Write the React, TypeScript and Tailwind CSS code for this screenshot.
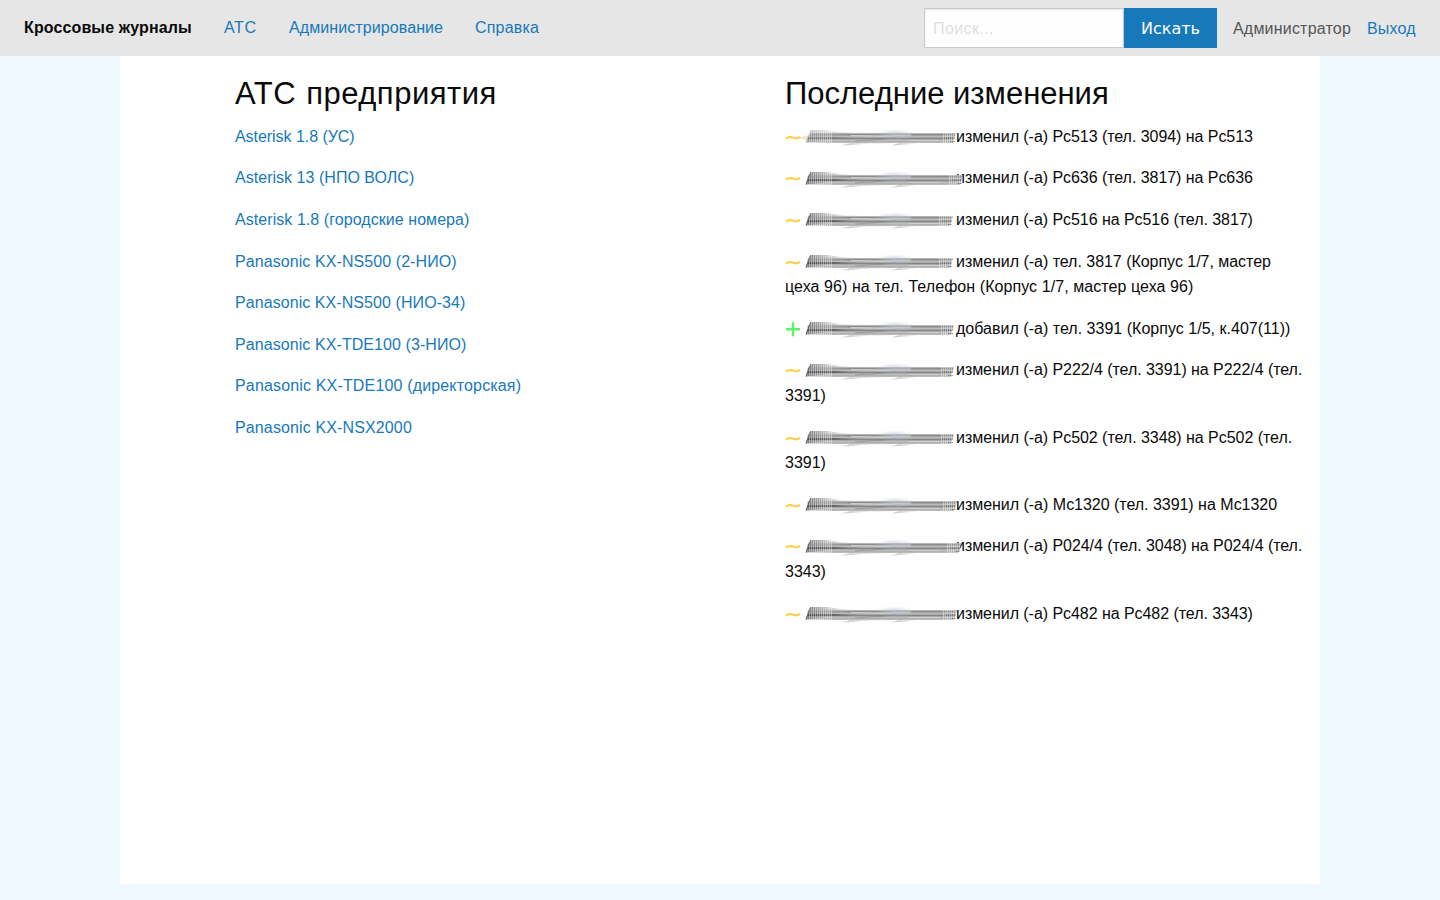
type Change = {
  kind: "edit" | "add";
  text: string;
  tracking: string;
  rest?: string;
  restTracking?: string;
  end: number;
};

const stations = [
  { name: "Asterisk 1.8 (УС)", tracking: "tracking-[-0.05px]" },
  { name: "Asterisk 13 (НПО ВОЛС)", tracking: "tracking-[0.03px]" },
  { name: "Asterisk 1.8 (городские номера)", tracking: "tracking-[0.06px]" },
  { name: "Panasonic KX-NS500 (2-НИО)", tracking: "tracking-[0.08px]" },
  { name: "Panasonic KX-NS500 (НИО-34)", tracking: "tracking-[0.07px]" },
  { name: "Panasonic KX-TDE100 (3-НИО)", tracking: "tracking-[0.08px]" },
  { name: "Panasonic KX-TDE100 (директорская)", tracking: "tracking-[0.16px]" },
  { name: "Panasonic KX-NSX2000", tracking: "tracking-[0.13px]" },
];

const changes: Change[] = [
  { kind: "edit", text: "изменил (-а) Рс513 (тел. 3094) на Рс513", tracking: "tracking-[-0.05px]", end: 151 },
  { kind: "edit", text: "изменил (-а) Рс636 (тел. 3817) на Рс636", tracking: "tracking-[-0.05px]", end: 158 },
  { kind: "edit", text: "изменил (-а) Рс516 на Рс516 (тел. 3817)", tracking: "tracking-[-0.05px]", end: 148 },
  {
    kind: "edit",
    text: "изменил (-а) тел. 3817 (Корпус 1/7, мастер",
    tracking: "tracking-[-0.03px]",
    rest: "цеха 96) на тел. Телефон (Корпус 1/7, мастер цеха 96)",
    restTracking: "tracking-[0.07px]",
    end: 148,
  },
  { kind: "add", text: "добавил (-а) тел. 3391 (Корпус 1/5, к.407(11))", tracking: "tracking-[0.02px]", end: 149 },
  { kind: "edit", text: "изменил (-а) Р222/4 (тел. 3391) на Р222/4 (тел.", tracking: "tracking-[-0.05px]", rest: "3391)", end: 149 },
  { kind: "edit", text: "изменил (-а) Рс502 (тел. 3348) на Рс502 (тел.", tracking: "tracking-[-0.04px]", rest: "3391)", end: 149 },
  { kind: "edit", text: "изменил (-а) Мс1320 (тел. 3391) на Мс1320", tracking: "tracking-[-0.03px]", end: 152 },
  { kind: "edit", text: "изменил (-а) Р024/4 (тел. 3048) на Р024/4 (тел.", tracking: "tracking-[-0.05px]", rest: "3343)", end: 156 },
  { kind: "edit", text: "изменил (-а) Рс482 на Рс482 (тел. 3343)", tracking: "tracking-[-0.05px]", end: 152 },
];

function SmudgeDefs() {
  return (
    <svg className="absolute size-0" aria-hidden="true">
      <defs>
        <linearGradient id="band" x1="0" y1="0" x2="0" y2="1">
          <stop offset="0" stopColor="#bbb" stopOpacity="0.6" />
          <stop offset="0.18" stopColor="#8c8c8c" />
          <stop offset="0.38" stopColor="#c0c0c0" />
          <stop offset="0.54" stopColor="#858585" />
          <stop offset="0.7" stopColor="#c2c2c2" />
          <stop offset="0.88" stopColor="#a8a8a8" />
          <stop offset="1" stopColor="#ccc" stopOpacity="0.5" />
        </linearGradient>
        <linearGradient id="head" x1="0" y1="0" x2="1" y2="0">
          <stop offset="0" stopColor="#777" />
          <stop offset="0.4" stopColor="#999" stopOpacity="0.75" />
          <stop offset="1" stopColor="#ccc" stopOpacity="0" />
        </linearGradient>
        <linearGradient id="core" x1="0" y1="0" x2="1" y2="0">
          <stop offset="0" stopColor="#222" />
          <stop offset="0.5" stopColor="#666" />
          <stop offset="1" stopColor="#888" stopOpacity="0" />
        </linearGradient>
        <linearGradient id="wisp" x1="0" y1="0" x2="1" y2="0">
          <stop offset="0" stopColor="#888" stopOpacity="0.7" />
          <stop offset="1" stopColor="#bbb" stopOpacity="0.1" />
        </linearGradient>
        <radialGradient id="glow">
          <stop offset="0" stopColor="#b5bccb" stopOpacity="0.75" />
          <stop offset="1" stopColor="#c8cdd6" stopOpacity="0" />
        </radialGradient>
        <pattern id="hatch" width="2" height="20" patternUnits="userSpaceOnUse">
          <rect width="1" height="20" fill="#fff" fillOpacity="0.4" />
        </pattern>
      </defs>
    </svg>
  );
}

function Smudge({ end, faded }: { end: number; faded: boolean }) {
  return (
    <svg
      className="relative mt-[4.4px] h-5 w-[151px] shrink-0 overflow-visible blur-[0.35px]"
      viewBox="0 0 151 20"
      aria-hidden="true"
    >
      {faded && <path d="M-6 9.5L8 6V13L-6 10.5Z" fill="#f0dcae" fillOpacity="0.7" />}
      <path d={`M${faded ? 6 : 3} 5L28 4.5L60 5H${end}L${end - 3} 15H95L60 15.5L1 14.5Z`} fill="url(#band)" />
      <path d="M5.5 2H22L44 5V10L0.5 14.5Z" fill="url(#head)" fillOpacity={faded ? 0.5 : 1} />
      <path d="M3 9.5L30 9L68 10L30 11L2 10.8Z" fill="url(#core)" fillOpacity={faded ? 0.4 : 0.8} />
      <path d="M50 13Q72 12 92 9.5" stroke="#777" strokeOpacity="0.5" fill="none" />
      <path d="M46 7.5Q78 9 106 7" stroke="#e2e2e2" strokeOpacity="0.7" fill="none" />
      <path d="M104 12.5H134" stroke="#ddd" strokeOpacity="0.6" />
      <ellipse cx="90" cy="6.5" rx="20" ry="5.5" fill="url(#glow)" />
      <path d="M36 17.5L46 15H67L52 16.8Z" fill="url(#wisp)" />
      <path d="M86 17.5L94 15H114L102 16.5Z" fill="url(#wisp)" />
      <path d={`M${end - 12} 10H${end - 1}M${end - 6} 13.5H${end - 1}`} stroke="#333" strokeOpacity="0.5" />
      <path d="M4 1H28V15H2Z" fill="url(#hatch)" />
      <path d={`M36 15H66V18H36ZM86 15H114V18H86ZM${end - 14} 5H${end}V15H${end - 14}Z`} fill="url(#hatch)" />
      {!faded && <path d="M5.5 2.5L1.2 14.5" stroke="#55504c" strokeOpacity="0.7" fill="none" />}
    </svg>
  );
}

function Marker({ kind }: { kind: Change["kind"] }) {
  return (
    <svg className="mr-1 h-[26px] w-4 shrink-0" viewBox="0 0 16 26" fill="none" aria-hidden="true">
      {kind === "add" ? (
        <path d="M1 13.2H15M8 6.2V20.2" stroke="#5df365" strokeWidth="2.4" />
      ) : (
        <path d="M1 14.7C3 12.700 5 12.300 8 13.700C11 15.100 13 14.500 15 12.800" stroke="#ffcb3d" strokeWidth="2" />
      )}
    </svg>
  );
}

export default function App() {
  return (
    <div className="flex min-h-screen flex-col bg-[#eff7ff] font-['Liberation_Sans',sans-serif] text-base leading-[1.6] text-[#0a0a0a]">
      <SmudgeDefs />
      <header className="flex h-14 items-center justify-between bg-[#e6e6e6] px-6 leading-none whitespace-nowrap">
        <nav className="flex gap-8 text-[#1779ba]">
          <span className="w-[168px] font-bold tracking-[0.12px] text-[#0a0a0a]">Кроссовые журналы</span>
          <a className="w-[33px] tracking-[0.7px]">АТС</a>
          <a className="w-[154px] tracking-[0.09px]">Администрирование</a>
          <a className="tracking-[0.18px]">Справка</a>
        </nav>
        <div className="flex items-center">
          <input
            className="h-10 w-[200px] border border-[#cacaca] bg-[#fefefe] px-2 pt-0.5 tracking-[0.4px] shadow-[inset_0_1px_2px_rgba(10,10,10,0.1)] outline-none placeholder:text-[#dedede]"
            placeholder="Поиск..."
          />
          <button className="h-10 w-[93px] bg-[#1779ba] pt-0.5 font-['DejaVu_Sans',sans-serif] text-[#fefefe]">Искать</button>
          <span className="ml-4 w-[118px] pt-0.5 tracking-[0.2px] text-[#555]">Администратор</span>
          <a className="ml-4 w-[49px] pt-0.5 tracking-[0.2px] text-[#1779ba]">Выход</a>
        </div>
      </header>
      <main className="mx-auto grid h-[828px] w-[1200px] grid-cols-[550px_535px] content-start bg-white pt-4 pl-[115px]">
        <section>
          <h3 className="mb-[8.4px] text-[31px] leading-[1.4] tracking-[0.5px] [word-spacing:1px]">АТС предприятия</h3>
          {stations.map((s) => (
            <p key={s.name} className="mb-4 text-[#1779ba]">
              <a className={s.tracking}>{s.name}</a>
            </p>
          ))}
        </section>
        <section>
          <h3 className="mb-[8.4px] text-[31px] leading-[1.4]">Последние изменения</h3>
          {changes.map((c, i) => (
            <div key={i} className="mb-4 whitespace-nowrap">
              <div className="flex h-[25.6px] items-start">
                <Marker kind={c.kind} />
                <span className={`order-3 ${c.tracking}`}>{c.text}</span>
                <Smudge end={c.end} faded={i === 0} />
              </div>
              {c.rest && <div className={c.restTracking}>{c.rest}</div>}
            </div>
          ))}
        </section>
      </main>
    </div>
  );
}
